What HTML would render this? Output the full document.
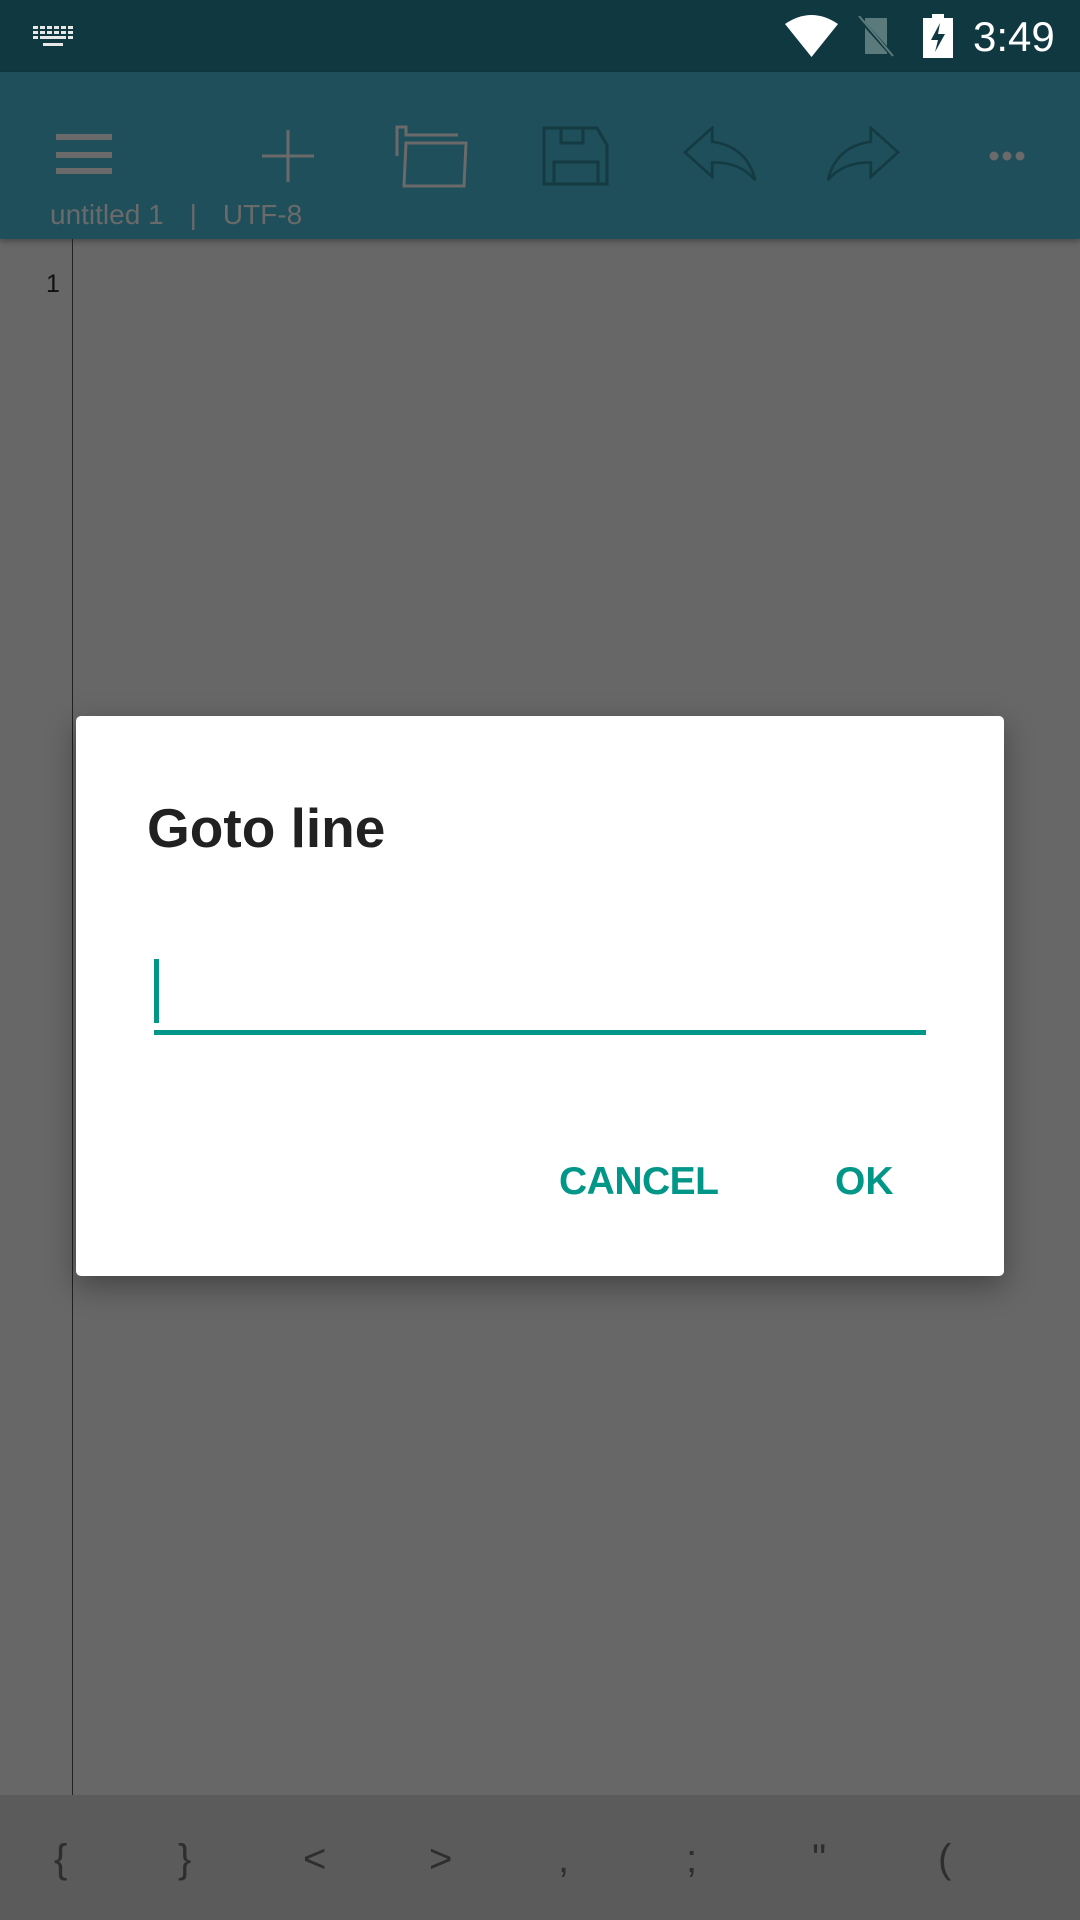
<!DOCTYPE html>
<html><head><meta charset="utf-8"><style>
*{margin:0;padding:0;box-sizing:border-box}
body{width:1080px;height:1920px;position:relative;overflow:hidden;background:#676767;font-family:"Liberation Sans",sans-serif}
.abs{position:absolute}
</style></head><body>
<div class="abs" style="left:0;top:0;width:1080px;height:72px;background:#103840"></div>
<svg class="abs" style="left:33px;top:26px" width="42" height="22" viewBox="0 0 42 22">
<g fill="#e8e8e8">
<rect x="0" y="0" width="5" height="3"/><rect x="7" y="0" width="5" height="3"/><rect x="14" y="0" width="5" height="3"/><rect x="21" y="0" width="5" height="3"/><rect x="28" y="0" width="5" height="3"/><rect x="35" y="0" width="5" height="3"/>
<rect x="0" y="5" width="5" height="3"/><rect x="7" y="5" width="5" height="3"/><rect x="14" y="5" width="5" height="3"/><rect x="21" y="5" width="5" height="3"/><rect x="28" y="5" width="5" height="3"/><rect x="35" y="5" width="5" height="3"/>
<rect x="0" y="10" width="5" height="3"/><rect x="7" y="10" width="26" height="3"/><rect x="35" y="10" width="5" height="3"/>
<rect x="10" y="17" width="20" height="3"/></g></svg>
<svg class="abs" style="left:785px;top:14px" width="53" height="43" viewBox="0 0 53 43"><path d="M0 10 Q26.5 -8 53 10 L26.5 43 Z" fill="#fff"/></svg>
<svg class="abs" style="left:857px;top:16px" width="38" height="42" viewBox="0 0 38 42"><path d="M8 2 H30 V38 H8 Z" fill="#5a7a7c"/><line x1="2" y1="2" x2="36" y2="40" stroke="#103840" stroke-width="4"/><line x1="2" y1="0" x2="36" y2="40" stroke="#5a7a7c" stroke-width="2"/></svg>
<svg class="abs" style="left:923px;top:14px" width="30" height="44" viewBox="0 0 30 44"><rect x="9" y="0" width="12" height="4" fill="#fff"/><rect x="0" y="4" width="30" height="40" fill="#fff"/><path d="M17 9 L8 26 H15 L12 38 L22 20 H15 Z" fill="#103840"/></svg>
<div class="abs" style="left:973px;top:12px;font-size:42px;color:#fff;line-height:50px">3:49</div>

<div class="abs" style="left:0;top:72px;width:1080px;height:167px;background:#1e4f5a;box-shadow:0 3px 5px rgba(0,0,0,.25)"></div>
<div class="abs" style="left:56px;top:134px;width:56px;height:6px;background:#6a6a6a"></div>
<div class="abs" style="left:56px;top:152px;width:56px;height:6px;background:#6a6a6a"></div>
<div class="abs" style="left:56px;top:168px;width:56px;height:6px;background:#6a6a6a"></div>
<svg class="abs" style="left:260px;top:128px" width="56" height="56"><path d="M28 2 V54 M2 28 H54" stroke="#6a6a6a" stroke-width="3" fill="none"/></svg>
<svg class="abs" style="left:394px;top:124px" width="76" height="64" viewBox="0 0 76 64"><path d="M3 32 V3 H12 V11 H64 M10 62 L12 19 H72 L70 62 Z" stroke="#6a6a6a" stroke-width="3" fill="none"/></svg>
<svg class="abs" style="left:541px;top:125px" width="70" height="62" viewBox="0 0 70 62"><path d="M3 3 H56 L66 20 V59 H3 Z M20 3 V18 H42 V3 M13 59 V37 H57 V59" stroke="#143a42" stroke-width="3" fill="none"/></svg>
<svg class="abs" style="left:683px;top:126px" width="74" height="56" viewBox="2.5 4.5 19 16" preserveAspectRatio="none"><path d="M10 9V5l-7 7 7 7v-4.1c5 0 8.5 1.6 11 5.1-1-5-4-10-11-11z" stroke="#143a42" stroke-width="0.7" fill="none"/></svg>
<svg class="abs" style="left:826px;top:126px;transform:scaleX(-1)" width="74" height="56" viewBox="2.5 4.5 19 16" preserveAspectRatio="none"><path d="M10 9V5l-7 7 7 7v-4.1c5 0 8.5 1.6 11 5.1-1-5-4-10-11-11z" stroke="#143a42" stroke-width="0.7" fill="none"/></svg>
<svg class="abs" style="left:988px;top:148px" width="40" height="16"><circle cx="6" cy="8" r="4.5" fill="#6a6a6a"/><circle cx="19" cy="8" r="4.5" fill="#6a6a6a"/><circle cx="32" cy="8" r="4.5" fill="#6a6a6a"/></svg>
<div class="abs" style="left:50px;top:198px;font-size:28px;color:#6a6a6a;line-height:34px;white-space:pre">untitled 1<span style="display:inline-block;width:26px"></span>|<span style="display:inline-block;width:26px"></span>UTF-8</div>

<div class="abs" style="left:72px;top:239px;width:1px;height:1556px;background:#222"></div>
<div class="abs" style="left:46px;top:270px;font-size:25px;color:#111">1</div>

<div class="abs" style="left:0;top:1795px;width:1080px;height:125px;background:#5b5b5b"></div>
<div class="abs" style="top:1834px;left:0;width:1080px;font-size:40px;color:#2e2e2e;line-height:50px">
<span class="abs" style="left:54px">{</span><span class="abs" style="left:178px">}</span><span class="abs" style="left:303px">&lt;</span><span class="abs" style="left:429px">&gt;</span><span class="abs" style="left:558px">,</span><span class="abs" style="left:686px">;</span><span class="abs" style="left:812px">"</span><span class="abs" style="left:938px">(</span></div>

<div class="abs" style="left:76px;top:716px;width:928px;height:560px;background:#fff;border-radius:5px;box-shadow:0 10px 30px rgba(0,0,0,.35)"></div>
<div class="abs" style="left:147px;top:795px;font-size:55px;font-weight:bold;color:#212121;line-height:66px">Goto line</div>
<div class="abs" style="left:154px;top:959px;width:5px;height:64px;background:#009688"></div>
<div class="abs" style="left:154px;top:1030px;width:772px;height:5px;background:#009688"></div>
<div class="abs" style="left:559px;top:1159px;font-size:39px;font-weight:bold;color:#009688;line-height:46px;letter-spacing:-0.5px">CANCEL</div>
<div class="abs" style="left:835px;top:1159px;font-size:39px;font-weight:bold;color:#009688;line-height:46px">OK</div>
</body></html>
